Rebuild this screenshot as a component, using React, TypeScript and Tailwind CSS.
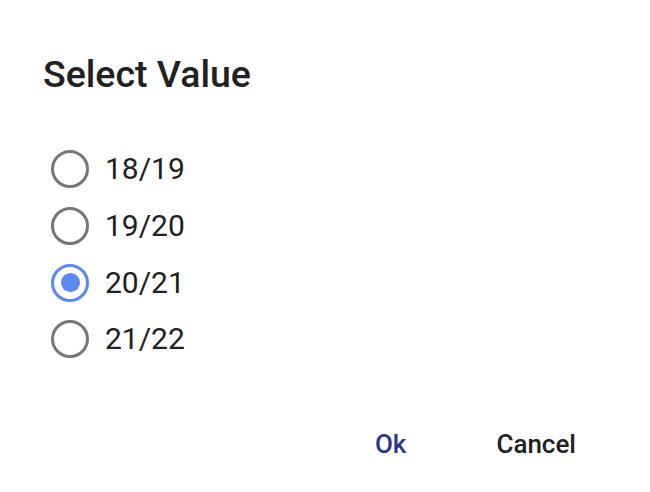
import { useState } from "react";

const options = ["18/19", "19/20", "20/21", "21/22"];

function Radio({ checked }: { checked: boolean }) {
  return (
    <span
      className={`flex h-[38px] w-[38px] items-center justify-center rounded-full border-[3px] ${
        checked ? "border-[#5a8af0]" : "border-[#767676]"
      }`}
    >
      {checked && <span className="h-[19px] w-[19px] rounded-full bg-[#5a8af0]" />}
    </span>
  );
}

export default function App() {
  const [value, setValue] = useState("20/21");

  return (
    <div
      className="flex h-[492px] w-[650px] flex-col bg-white text-[#212121]"
      style={{ fontFamily: "Roboto, 'Noto Sans', sans-serif" }}
    >
      <h1 className="pl-[43px] pt-[50px] text-[37.5px] font-medium leading-[48px]">
        Select Value
      </h1>

      <div className="mt-[43px] flex flex-col pl-[51px]">
        {options.map((o) => (
          <button
            key={o}
            onClick={() => setValue(o)}
            className="flex h-[56.7px] items-center gap-[16px] text-left"
          >
            <Radio checked={value === o} />
            <span className="text-[30px] leading-none">{o}</span>
          </button>
        ))}
      </div>

      <div className="mt-auto flex justify-end gap-[90px] pb-[33px] pr-[74px]">
        <button className="text-[26px] font-medium leading-[30px] text-[#283593]">
          Ok
        </button>
        <button className="text-[26px] font-medium leading-[30px] text-[#212121]">
          Cancel
        </button>
      </div>
    </div>
  );
}
